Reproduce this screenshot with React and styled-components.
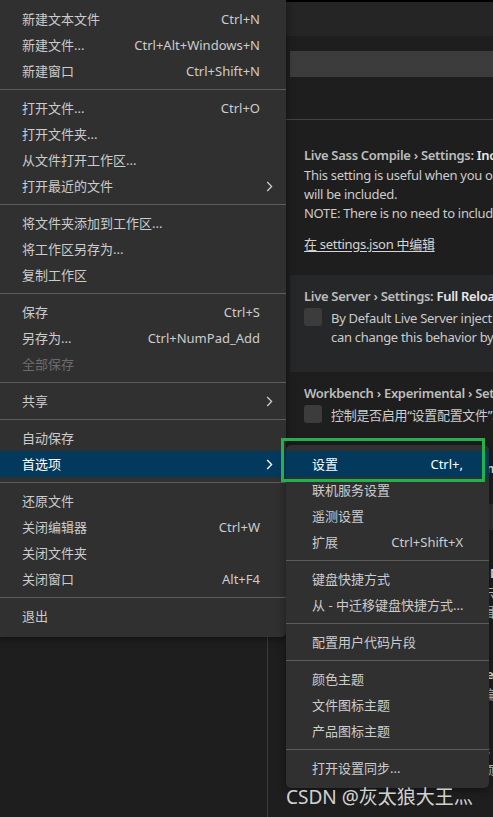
import React from "react";
import styled, { createGlobalStyle } from "styled-components";

const uiFont = `"Noto Sans", "Noto Sans CJK SC", sans-serif`;

const GlobalStyle = createGlobalStyle`
  html, body {
    margin: 0;
    padding: 0;
    background: #1e1e1e;
  }
  body {
    font-family: ${uiFont};
    -webkit-font-smoothing: antialiased;
  }
`;

const Page = styled.div`
  position: relative;
  width: 493px;
  height: 817px;
  overflow: hidden;
  display: flex;
  background: #1e1e1e;
  font-family: ${uiFont};
`;

const SideBar = styled.div`
  width: 267px;
  flex-shrink: 0;
  border-right: 1px solid #3b3b3b;
  background: #1e1e1e;
`;

const Editor = styled.div`
  flex: 1;
  min-width: 0;
  display: flex;
  flex-direction: column;
  background: #1e1e1e;
`;

const TabStrip = styled.div`
  height: 34px;
  border-top: 2px solid #000;
  background: #252526;
`;

const SearchRow = styled.div`
  padding: 15px 0 42px 22px;
  border-bottom: 1px solid #444;
`;

const SearchBox = styled.div`
  height: 26px;
  background: #3c3c3c;
`;

const SettingsList = styled.div`
  padding-top: 14px;
  display: flex;
  flex-direction: column;
  white-space: nowrap;
  letter-spacing: -0.3px;
`;

const Entry = styled.div`
  margin-left: 22px;
  padding: 12px 14px ${(p) => p.$pb || 22}px;
  background: ${(p) => (p.$focused ? "#262728" : "transparent")};
`;

const Title = styled.div`
  font-size: 13px;
  line-height: 18px;
  font-weight: 600;
  color: #bdbdbd;
`;

const Name = styled.span`
  color: #e8e8e8;
`;

const Desc = styled.div`
  margin-top: 2px;
  font-size: 13px;
  line-height: 19px;
  color: #cccccc;
`;

const EditLink = styled.div`
  margin-top: 12px;
  font-size: 13px;
  line-height: 18px;
  color: #d4d4d4;
  text-decoration: underline;
  text-underline-offset: 2px;
`;

const CheckRow = styled.div`
  display: flex;
  align-items: flex-start;
  gap: 9px;
  margin-top: 2px;
`;

const CheckBox = styled.div`
  flex-shrink: 0;
  width: 18px;
  height: 18px;
  margin-top: 1px;
  border-radius: 3px;
  background: #3c3c3c;
`;

const SelectBox = styled.div`
  margin-top: 6px;
  width: 320px;
  height: 26px;
  background: #313131;
`;

const Menu = styled.div`
  position: absolute;
  left: ${(p) => p.$left}px;
  top: ${(p) => p.$top}px;
  width: ${(p) => p.$width}px;
  padding: ${(p) => p.$pt}px 0 ${(p) => p.$pb}px;
  background: #303031;
  border-radius: ${(p) => p.$radius};
  box-shadow: 0 2px 8px rgba(0, 0, 0, 0.45);
  font-size: 13px;
  white-space: nowrap;
`;

const Item = styled.div`
  display: grid;
  grid-template-columns: 1fr auto 26px;
  align-items: center;
  height: 26px;
  padding-left: 26px;
  color: ${(p) => (p.$active ? "#ffffff" : p.$disabled ? "#6b6b6b" : "#cccccc")};
  background: ${(p) => (p.$active ? "#04395e" : "transparent")};
  line-height: 24px;
`;

const Keys = styled.span`
  padding-left: 20px;
`;

const Indicator = styled.span`
  display: flex;
  align-items: center;
  padding-left: 6px;
`;

const Separator = styled.div`
  height: 1px;
  margin: 5px 0;
  background: #5c5c5c;
`;

const Marker = styled.div`
  position: absolute;
  left: 281px;
  top: 438px;
  width: 204px;
  height: 44px;
  box-sizing: border-box;
  border: 3px solid #22b14c;
`;

const Watermark = styled.div`
  position: absolute;
  left: 286px;
  top: 784px;
  font-family: ${uiFont};
  font-size: 19px;
  line-height: 26px;
  color: rgba(235, 235, 235, 0.9);
`;

const Chevron = () => (
  <svg width="7" height="11" viewBox="0 0 7 11">
    <path d="M1.2 1 L5.6 5.5 L1.2 10" fill="none" stroke="currentColor" strokeWidth="1.3" />
  </svg>
);

const fileMenu = [
  { label: "新建文本文件", keys: "Ctrl+N" },
  { label: "新建文件...", keys: "Ctrl+Alt+Windows+N" },
  { label: "新建窗口", keys: "Ctrl+Shift+N" },
  "sep",
  { label: "打开文件...", keys: "Ctrl+O" },
  { label: "打开文件夹..." },
  { label: "从文件打开工作区..." },
  { label: "打开最近的文件", sub: true },
  "sep",
  { label: "将文件夹添加到工作区..." },
  { label: "将工作区另存为..." },
  { label: "复制工作区" },
  "sep",
  { label: "保存", keys: "Ctrl+S" },
  { label: "另存为...", keys: "Ctrl+NumPad_Add" },
  { label: "全部保存", disabled: true },
  "sep",
  { label: "共享", sub: true },
  "sep",
  { label: "自动保存" },
  { label: "首选项", sub: true, active: true },
  "sep",
  { label: "还原文件" },
  { label: "关闭编辑器", keys: "Ctrl+W" },
  { label: "关闭文件夹" },
  { label: "关闭窗口", keys: "Alt+F4" },
  "sep",
  { label: "退出" },
];

const prefMenu = [
  { label: "设置", keys: "Ctrl+,", active: true },
  { label: "联机服务设置" },
  { label: "遥测设置" },
  { label: "扩展", keys: "Ctrl+Shift+X" },
  "sep",
  { label: "键盘快捷方式" },
  { label: "从 - 中迁移键盘快捷方式..." },
  "sep",
  { label: "配置用户代码片段" },
  "sep",
  { label: "颜色主题" },
  { label: "文件图标主题" },
  { label: "产品图标主题" },
  "sep",
  { label: "打开设置同步..." },
];

function MenuList({ items }) {
  return items.map((it, i) =>
    it === "sep" ? (
      <Separator key={i} />
    ) : (
      <Item key={i} $active={it.active} $disabled={it.disabled}>
        <span>{it.label}</span>
        <Keys>{it.keys}</Keys>
        <Indicator>{it.sub && <Chevron />}</Indicator>
      </Item>
    )
  );
}

export default function App() {
  return (
    <>
      <GlobalStyle />
      <Page>
        <SideBar />
        <Editor>
          <TabStrip />
          <SearchRow>
            <SearchBox />
          </SearchRow>
          <SettingsList>
            <Entry>
              <Title>
                Live Sass Compile › Settings: <Name>Include Items</Name>
              </Title>
              <Desc>
                This setting is useful when you only need a few specific scss files to be compiled. Only files matching these patterns
                <br />
                will be included.
                <br />
                NOTE: There is no need to include the file extension, it is added automatically.
              </Desc>
              <EditLink>在 settings.json 中编辑</EditLink>
            </Entry>
            <Entry $focused $pb={25}>
              <Title>
                Live Server › Settings: <Name>Full Reload</Name>
              </Title>
              <CheckRow>
                <CheckBox />
                <Desc>
                  By Default Live Server inject CSS changes without full reloading of browser. You
                  <br />
                  can change this behavior by making this setting as `true`.
                </Desc>
              </CheckRow>
            </Entry>
            <Entry>
              <Title>
                Workbench › Experimental › Settings: <Name>Profiles</Name>
              </Title>
              <CheckRow>
                <CheckBox />
                <Desc>控制是否启用“设置配置文件”功能。</Desc>
              </CheckRow>
            </Entry>
            <Entry>
              <Title>
                Workbench › Editor: <Name>Label Format</Name>
              </Title>
              <Desc>控制编辑器标签的格式。</Desc>
              <SelectBox />
            </Entry>
            <Entry $pb={31}>
              <Title>
                Workbench › Editor: <Name>Language Detection Hints</Name>
              </Title>
              <Desc>
                启用后，在编辑器中键入时将显示语言检测提示。
                <br />
                此设置仅适用于无标题的文本编辑器。
              </Desc>
            </Entry>
            <Entry $pb={25}>
              <Title>
                Workbench › Editor: <Name>Focus Recent Editor After Close</Name>
              </Title>
              <Desc>控制是否按最近使用的顺序打开编辑器。</Desc>
            </Entry>
            <Entry>
              <Title>
                Workbench › Editor: <Name>Show Tabs</Name>
              </Title>
              <Desc>控制打开的编辑器是否显示在选项卡中。</Desc>
            </Entry>
          </SettingsList>
        </Editor>

        <Menu $left={-4} $top={0} $width={290} $pt={6} $pb={8} $radius="0 0 5px 5px">
          <MenuList items={fileMenu} />
        </Menu>
        <Menu $left={286} $top={445} $width={203} $pt={6} $pb={7} $radius="5px">
          <MenuList items={prefMenu} />
        </Menu>
        <Marker />
        <Watermark>CSDN @灰太狼大王灬</Watermark>
      </Page>
    </>
  );
}
